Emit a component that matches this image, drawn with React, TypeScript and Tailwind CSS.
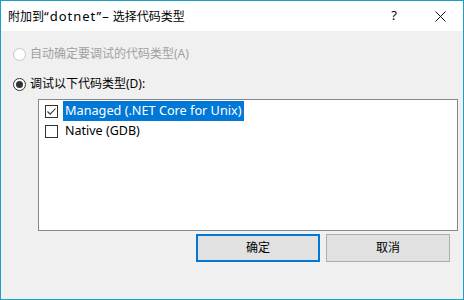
const font = { fontFamily: '"Noto Sans", "Noto Sans CJK SC", sans-serif' };

function Radio({ checked, disabled }: { checked?: boolean; disabled?: boolean }) {
  return (
    <span
      className={
        "flex h-[13px] w-[13px] items-center justify-center rounded-full border bg-white " +
        (disabled ? "border-[#c6c6c6]" : "border-[#333333]")
      }
    >
      {checked ? <span className="h-[7px] w-[7px] rounded-full bg-[#333333]" /> : null}
    </span>
  );
}

function Check({ checked }: { checked?: boolean }) {
  return (
    <span className="flex h-[13px] w-[13px] items-center justify-center border border-[#333333] bg-white">
      {checked ? (
        <svg width="11" height="11" viewBox="0 0 11 11" fill="none">
          <path d="M1.5 5.5 L4.2 8.2 L9.5 2.5" stroke="#333333" strokeWidth="1.1" />
        </svg>
      ) : null}
    </span>
  );
}

export default function App() {
  return (
    <div
      className="flex h-[300px] w-[464px] flex-col border border-[#1ba1c9] bg-[#f0f0f0] text-[12px] text-black"
      style={font}
    >
      <div className="flex h-[30px] items-center bg-white">
        <span className="pl-[7px] leading-[16px]">
          附加到<span className="text-[13px] tracking-[1px]">“dotnet”–</span> 选择代码类型
        </span>
        <div className="ml-auto flex h-full">
          <span className="flex w-[46px] items-center justify-center text-[13px]">?</span>
          <span className="flex w-[46px] items-center justify-center">
            <svg width="11" height="11" viewBox="0 0 11 11">
              <path d="M0.5 0.5 L10.5 10.5 M10.5 0.5 L0.5 10.5" stroke="#111" strokeWidth="1" />
            </svg>
          </span>
        </div>
      </div>

      <div className="flex flex-col pl-[12px]">
        <div className="mt-[13px] flex h-[20px] items-center gap-[4px] text-[#a0a0a0]">
          <Radio disabled />
          <span className="leading-[16px]">自动确定要调试的代码类型(A)</span>
        </div>
        <div className="mt-[10px] flex h-[20px] items-center gap-[4px]">
          <Radio checked />
          <span className="leading-[16px]">调试以下代码类型(D):</span>
        </div>

        <div className="ml-[25px] mt-[5px] h-[132px] w-[420px] border border-[#82878c] bg-white pt-[1px]">
          <div className="flex h-[20px] items-center pl-[6px]">
            <Check checked />
            <span className="ml-[5px] flex h-[20px] items-center bg-[#0078d7] px-[2px] text-[12.7px] text-white">
              Managed (.NET Core for Unix)
            </span>
          </div>
          <div className="flex h-[20px] items-center pl-[6px]">
            <Check />
            <span className="ml-[5px] px-[2px] text-[12.5px]">Native (GDB)</span>
          </div>
        </div>

        <div className="mt-[3px] flex justify-end gap-[6px] pr-[13px]">
          <button className="flex h-[28px] w-[124px] items-center justify-center border-2 border-[#0078d7] bg-[#e1e1e1]">
            确定
          </button>
          <button className="flex h-[28px] w-[124px] items-center justify-center border border-[#adadad] bg-[#e1e1e1]">
            取消
          </button>
        </div>
      </div>
    </div>
  );
}
